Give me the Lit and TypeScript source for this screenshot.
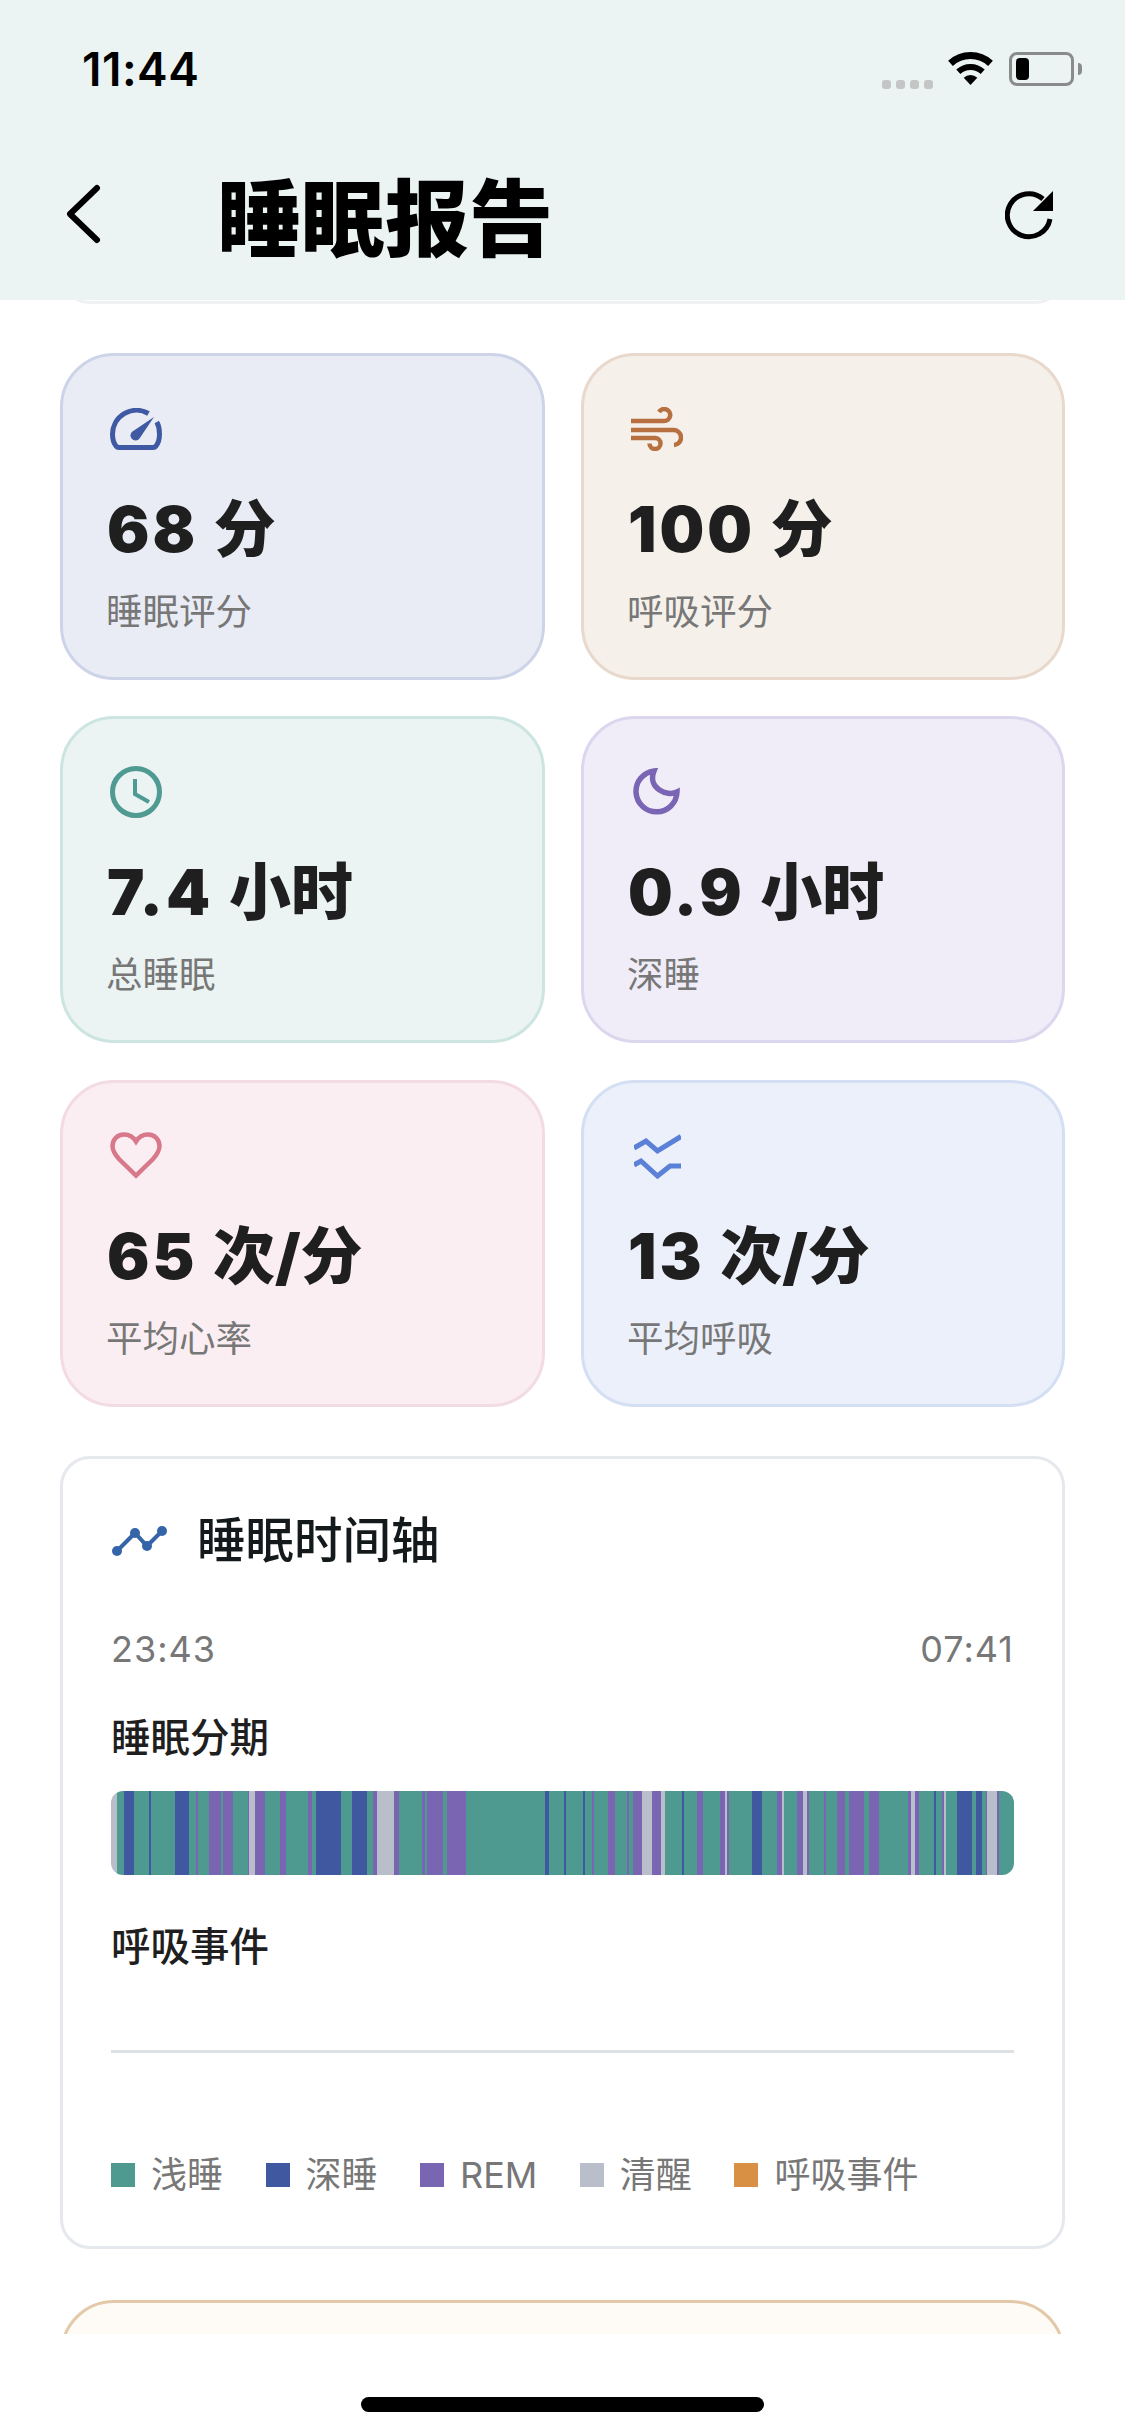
import { LitElement, html, css, svg } from "lit";
import { customElement } from "lit/decorators.js";
import { classMap } from "lit/directives/class-map.js";

type Stage = "l" | "d" | "r" | "w";

// Sleep stages as [stage, right edge]; edges are in thirds of a pixel along the bar.
const STAGE_EDGES: [Stage, number][] = [
  ["w", 19], ["l", 39], ["d", 69], ["l", 114], ["d", 120], ["l", 193], ["d", 234], ["l", 255],
  ["r", 261], ["l", 295], ["r", 330], ["l", 335], ["r", 365], ["l", 412], ["r", 415], ["w", 433],
  ["r", 462], ["l", 507], ["r", 524], ["l", 592], ["r", 603], ["l", 614], ["d", 689], ["l", 723],
  ["d", 769], ["l", 786], ["r", 797], ["w", 848], ["r", 865], ["l", 933], ["r", 944], ["l", 950],
  ["r", 997], ["l", 1008], ["r", 1065], ["l", 1303], ["d", 1315], ["l", 1359], ["d", 1365],
  ["l", 1416], ["d", 1422], ["l", 1445], ["r", 1451], ["l", 1491], ["r", 1514], ["l", 1549],
  ["r", 1555], ["l", 1566], ["r", 1594], ["w", 1623], ["r", 1650], ["w", 1662], ["l", 1713],
  ["d", 1719], ["l", 1758], ["r", 1776], ["l", 1827], ["r", 1844], ["w", 1850], ["r", 1856],
  ["l", 1923], ["d", 1953], ["l", 1998], ["r", 2015], ["w", 2021], ["l", 2060], ["r", 2077],
  ["w", 2089], ["r", 2095], ["l", 2140], ["r", 2146], ["l", 2179], ["r", 2204], ["l", 2215],
  ["r", 2259], ["l", 2276], ["r", 2305], ["l", 2391], ["r", 2402], ["w", 2413], ["r", 2425],
  ["l", 2469], ["d", 2475], ["l", 2493], ["r", 2499], ["w", 2505], ["l", 2538], ["d", 2584],
  ["l", 2595], ["d", 2613], ["l", 2625], ["r", 2630], ["w", 2659], ["r", 2664], ["l", 2709],
];

const ICONS = {
  gauge: svg`<svg width="52" height="42" viewBox="0 0 52 42" fill="none">
    <path d="M38.5 5.5A24 24 0 0 0 2.5 26C2.5 31 3.5 35 6 38Q7 39.5 9 39.5H43Q45 39.5 46 38C48.5 35 49.5 31 49.5 26C49.5 21.6 48.8 17.5 46.8 14" stroke="currentColor" stroke-width="5"/>
    <path d="M44 9L29.5 30.5A5 5 0 1 1 22.5 23.5Z" fill="currentColor"/>
  </svg>`,
  wind: svg`<svg width="52" height="44" viewBox="0 0 52 44" fill="none" stroke="currentColor" stroke-width="4.5">
    <path d="M0 14H33A6 6 0 1 0 28 5"/>
    <path d="M0 23H42A7.5 7.5 0 0 1 43 38"/>
    <path d="M0 31H24A5.5 5.5 0 1 1 18.5 36.5"/>
  </svg>`,
  clock: svg`<svg width="52" height="52" viewBox="0 0 52 52" fill="none" stroke="currentColor">
    <circle cx="26" cy="26" r="23.5" stroke-width="5"/>
    <path d="M25 13V28L39 36" stroke-width="4"/>
  </svg>`,
  moon: svg`<svg width="48" height="48" viewBox="0 0 48 48" fill="none">
    <path d="M21 3A20.5 20.5 0 1 0 44 24C34 29 14 20 21 3Z" stroke="currentColor" stroke-width="5.5"/>
  </svg>`,
  heart: svg`<svg width="52" height="48" viewBox="0 0 52 48" fill="none">
    <path d="M26 9.5C23 4.5 18.5 2.5 14 2.5C7 2.5 2.5 8 2.5 14C2.5 19 5 22.5 9 27L26 43.5L43 27C47 22.5 49.5 19 49.5 14C49.5 8 45 2.5 38 2.5C33.5 2.5 29 4.5 26 9.5Z" stroke="currentColor" stroke-width="4.5"/>
  </svg>`,
  waves: svg`<svg width="47" height="46" viewBox="0 0 47 46" fill="none" stroke="currentColor" stroke-width="5">
    <path d="M0 15L12 8L23.5 18L47 3.5"/>
    <path d="M0 32L7 28L23.5 43L36 33H47"/>
  </svg>`,
};

const METRICS = [
  { tone: "navy", icon: ICONS.gauge, num: "68", unit: "分", label: "睡眠评分" },
  { tone: "tan", icon: ICONS.wind, num: "100", unit: "分", label: "呼吸评分" },
  { tone: "teal", icon: ICONS.clock, num: "7.4", unit: "小时", label: "总睡眠" },
  { tone: "violet", icon: ICONS.moon, num: "0.9", unit: "小时", label: "深睡" },
  { tone: "rose", icon: ICONS.heart, num: "65", unit: "次/分", label: "平均心率" },
  { tone: "sky", icon: ICONS.waves, num: "13", unit: "次/分", label: "平均呼吸" },
];

const LEGEND = [
  { key: "l", text: "浅睡" },
  { key: "d", text: "深睡" },
  { key: "r", text: "REM" },
  { key: "w", text: "清醒" },
  { key: "e", text: "呼吸事件" },
];

@customElement("app-root")
export class AppRoot extends LitElement {
  static styles = css`
    :host {
      display: flex;
      flex-direction: column;
      width: 1125px;
      height: 2436px;
      overflow: hidden;
      background: #fff;
      font-family: "Inter", "Noto Sans CJK SC", sans-serif;
      color: #1f1f1f;
    }
    .header {
      flex: none;
      height: 300px;
      background: #ecf4f3;
      position: relative;
      z-index: 1;
      box-sizing: border-box;
      padding-top: 42px;
    }
    .status {
      height: 54px;
      display: flex;
      align-items: center;
      padding: 0 43px 0 82px;
    }
    .clock-time {
      font-size: 46px;
      font-weight: 600;
      letter-spacing: 0.5px;
      color: #000;
      line-height: 54px;
      flex: 1;
    }
    .dots {
      display: flex;
      gap: 5px;
      align-self: flex-end;
      margin: 0 15px 7px 0;
    }
    .dots i {
      width: 9px;
      height: 9px;
      border-radius: 3px;
      background: #c4c6c6;
    }
    .wifi {
      display: block;
      margin-right: 16px;
    }
    .battery {
      width: 65px;
      height: 34px;
      box-sizing: border-box;
      border: 3px solid #8a8c8c;
      border-radius: 8px;
      padding: 3px 4px;
    }
    .battery i {
      display: block;
      width: 13px;
      height: 22px;
      background: #000;
      border-radius: 4px;
    }
    .nub {
      width: 4px;
      height: 12px;
      margin-left: 4px;
      background: #8a8c8c;
      border-radius: 0 4px 4px 0;
    }
    .nav {
      display: flex;
      align-items: center;
      height: 120px;
      margin-top: 58px;
      padding-left: 65px;
    }
    .back {
      display: block;
      flex: none;
    }
    .title {
      flex: 1;
      margin-left: 116px;
      font-family: "Noto Sans CJK SC", sans-serif;
      font-size: 84px;
      font-weight: 900;
      line-height: 120px;
      color: #000;
    }
    .refresh {
      display: block;
      margin-right: 70px;
    }
    .main {
      flex: 1;
      min-height: 0;
      overflow: hidden;
    }
    .scroll {
      margin-top: -56px;
      padding: 0 60px;
    }
    .peek {
      height: 60px;
      box-sizing: border-box;
      border: 3px solid #f0f1f1;
      border-radius: 48px;
      margin-bottom: 49px;
    }
    .grid {
      display: grid;
      grid-template-columns: 485px 484px;
      gap: 36.25px 36px;
    }
    .metric {
      height: 327px;
      box-sizing: border-box;
      border: 3px solid;
      border-radius: 54px;
      padding: 43px 43px 0;
    }
    .metric .icon {
      width: 60px;
      height: 60px;
      display: flex;
      align-items: center;
      justify-content: center;
    }
    .metric .value {
      margin: 25px 0 0 1px;
      font-size: 63px;
      font-weight: 900;
      line-height: 90px;
      letter-spacing: 3px;
      color: #1f1f1f;
    }
    .metric .value span {
      font-size: 62px;
      letter-spacing: 0;
    }
    .metric .label {
      margin-top: 10px;
      font-size: 36.5px;
      line-height: 54px;
      color: #777;
    }
    .navy { background: #e9ecf5; border-color: #cdd4e8; }
    .navy .icon { color: #3f59a3; }
    .tan { background: #f5f0ea; border-color: #e8d9cc; }
    .tan .icon { color: #b87040; }
    .teal { background: #ebf4f3; border-color: #cde5e1; }
    .teal .icon { color: #4f9a92; }
    .violet { background: #f0edf8; border-color: #dcd6ee; }
    .violet .icon { color: #7a65b4; }
    .rose { background: #faeef3; border-color: #f3dbe3; }
    .rose .icon { color: #d8788a; }
    .sky { background: #ecf0fa; border-color: #d4dff3; }
    .sky .icon { color: #5b80d8; }
    .timeline {
      margin-top: 49.5px;
      box-sizing: border-box;
      background: #fff;
      border: 3px solid #e5e8ec;
      border-radius: 30px;
      padding: 52px 48px 44px;
    }
    .tl-head {
      display: flex;
      align-items: center;
      height: 60px;
    }
    .tl-head svg {
      display: block;
      margin-right: 28px;
    }
    .tl-head h2 {
      margin: 0;
      font-size: 48.5px;
      font-weight: 500;
      color: #141a1c;
      line-height: 60px;
    }
    .times {
      display: flex;
      justify-content: space-between;
      margin-top: 51px;
      font-size: 36px;
      line-height: 54px;
      letter-spacing: 1px;
      color: #777;
    }
    .sub {
      font-size: 39.5px;
      font-weight: 500;
      line-height: 54px;
      color: #1f1f1f;
    }
    .sub.stage { margin-top: 35px; }
    .sub.events { margin-top: 45px; }
    .bar {
      display: flex;
      height: 84px;
      margin-top: 26px;
      border-radius: 12px;
      overflow: hidden;
    }
    .bar i { display: block; flex: none; }
    .l { background: #4f9a90; }
    .d { background: #3f58a0; }
    .r { background: #7a65b2; }
    .w { background: #b8bfca; }
    .e { background: #d89044; }
    .track {
      height: 3px;
      margin-top: 76px;
      background: #dde1e5;
    }
    .legend {
      display: flex;
      gap: 42.5px;
      margin-top: 95px;
      font-size: 36px;
      line-height: 54px;
      color: #777;
    }
    .legend div {
      display: flex;
      align-items: center;
      gap: 16px;
    }
    .legend i {
      width: 24px;
      height: 24px;
      display: block;
    }
    .next {
      margin-top: 51px;
      height: 200px;
      box-sizing: border-box;
      border: 3px solid #e3c9a9;
      border-radius: 54px;
      background: #fefbf6;
    }
    .home {
      flex: none;
      height: 102px;
      display: flex;
      justify-content: center;
      background: #fff;
      padding-top: 63px;
      box-sizing: border-box;
    }
    .home i {
      width: 403px;
      height: 15px;
      border-radius: 8px;
      background: #000;
    }
  `;

  private renderBar() {
    let prev = 0;
    return STAGE_EDGES.map(([stage, edge]) => {
      const width = (edge - prev) / 3;
      prev = edge;
      return html`<i class=${classMap({ [stage]: true })} style="width:${width}px"></i>`;
    });
  }

  render() {
    return html`
      <header class="header">
        <div class="status">
          <span class="clock-time">11:44</span>
          <div class="dots"><i></i><i></i><i></i><i></i></div>
          <svg class="wifi" width="45" height="34" viewBox="0 0 45 34" fill="none" stroke="#000">
            <path d="M2.5 11.4A29.5 29.5 0 0 1 42.5 11.4" stroke-width="7"/>
            <path d="M10.3 19.8A18 18 0 0 1 34.7 19.8" stroke-width="6"/>
            <path d="M22.5 33L15.7 25.7A10 10 0 0 1 29.3 25.7Z" fill="#000" stroke="none"/>
          </svg>
          <div class="battery"><i></i></div>
          <div class="nub"></div>
        </div>
        <div class="nav">
          <svg class="back" width="36" height="60" viewBox="0 0 36 60" fill="none">
            <path d="M32 4L5 30L32 56" stroke="#000" stroke-width="6" stroke-linecap="round" stroke-linejoin="round"/>
          </svg>
          <div class="title">睡眠报告</div>
          <svg class="refresh" width="50" height="52" viewBox="0 0 50 52" fill="none">
            <path d="M38 11A21.5 21.5 0 1 0 45 31" stroke="#000" stroke-width="5"/>
            <path d="M48 3V23H28Z" fill="#000"/>
          </svg>
        </div>
      </header>
      <main class="main">
        <div class="scroll">
          <div class="peek"></div>
          <section class="grid">
            ${METRICS.map(
              (m) => html`<article class="metric ${m.tone}">
                <div class="icon">${m.icon}</div>
                <div class="value">${m.num} <span>${m.unit}</span></div>
                <div class="label">${m.label}</div>
              </article>`
            )}
          </section>
          <section class="timeline">
            <div class="tl-head">
              <svg width="58" height="34" viewBox="0 0 58 34" fill="none">
                <path d="M6 27L24 9L36 22L51 7" stroke="#3565a8" stroke-width="4"/>
                <g fill="#3565a8">
                  <circle cx="6" cy="27" r="5"/><circle cx="24" cy="9" r="5"/>
                  <circle cx="36" cy="22" r="5"/><circle cx="51" cy="7" r="5"/>
                </g>
              </svg>
              <h2>睡眠时间轴</h2>
            </div>
            <div class="times"><span>23:43</span><span>07:41</span></div>
            <div class="sub stage">睡眠分期</div>
            <div class="bar">${this.renderBar()}</div>
            <div class="sub events">呼吸事件</div>
            <div class="track"></div>
            <div class="legend">
              ${LEGEND.map(
                (item) => html`<div><i class=${item.key}></i><span>${item.text}</span></div>`
              )}
            </div>
          </section>
          <section class="next"></section>
        </div>
      </main>
      <div class="home"><i></i></div>
    `;
  }
}
